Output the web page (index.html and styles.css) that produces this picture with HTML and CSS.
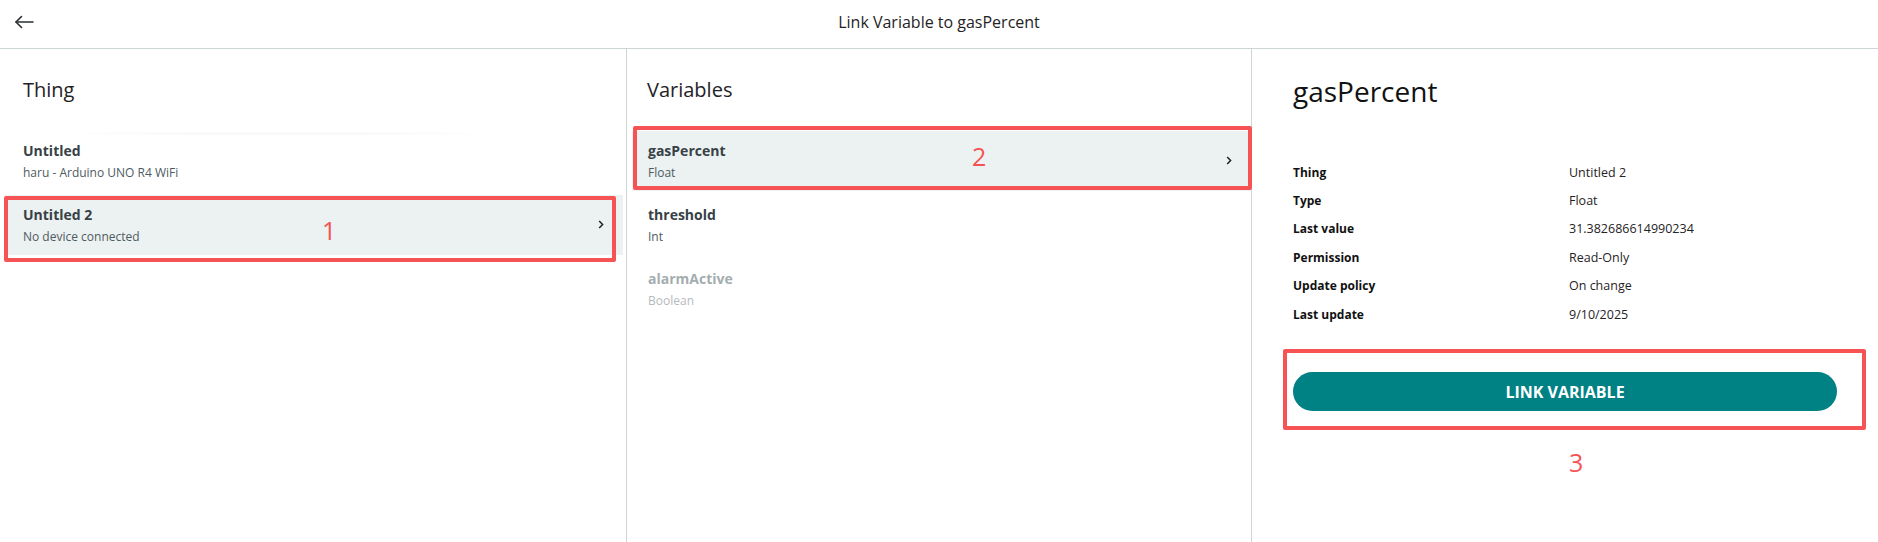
FILE: index.html
```html
<!DOCTYPE html>
<html lang="en">
<head>
<meta charset="utf-8">
<title>Link Variable to gasPercent</title>
<link rel="stylesheet" href="styles.css">
</head>
<body>
<div class="app">
  <header class="topbar">
    <button class="back" aria-label="Back">
      <svg width="20" height="14" viewBox="0 0 20 14" fill="none" stroke="#2b2f31" stroke-width="1.6" stroke-linecap="round" stroke-linejoin="round"><path d="M19 7H2"/><path d="M7.5 1.5L2 7l5.5 5.5"/></svg>
    </button>
    <h1 class="topbar-title">Link Variable to gasPercent</h1>
    <span></span>
  </header>

  <main class="columns">
    <section class="panel">
      <h2 class="panel-title">Thing</h2>
      <ul class="list list-things">
        <li class="item item-faded">
          <div class="item-text">
            <div class="item-name">Untitled</div>
            <div class="item-sub">haru - Arduino UNO R4 WiFi</div>
          </div>
        </li>
        <li class="item is-active">
          <div class="item-text">
            <div class="item-name">Untitled 2</div>
            <div class="item-sub">No device connected</div>
          </div>
          <svg class="chev" width="6" height="9" viewBox="0 0 6 9" fill="none" stroke="#1f2326" stroke-width="1.5"><path d="M1.2 1l3.4 3.5L1.2 8"/></svg>
        </li>
      </ul>
    </section>

    <section class="panel">
      <h2 class="panel-title">Variables</h2>
      <ul class="list list-vars">
        <li class="item is-active">
          <div class="item-text">
            <div class="item-name">gasPercent</div>
            <div class="item-sub">Float</div>
          </div>
          <svg class="chev" width="6" height="9" viewBox="0 0 6 9" fill="none" stroke="#1f2326" stroke-width="1.5"><path d="M1.2 1l3.4 3.5L1.2 8"/></svg>
        </li>
        <li class="item">
          <div class="item-text">
            <div class="item-name">threshold</div>
            <div class="item-sub">Int</div>
          </div>
        </li>
        <li class="item is-disabled">
          <div class="item-text">
            <div class="item-name">alarmActive</div>
            <div class="item-sub">Boolean</div>
          </div>
        </li>
      </ul>
    </section>

    <section class="panel panel-detail">
      <h2 class="detail-title">gasPercent</h2>
      <dl class="props">
        <dt>Thing</dt><dd>Untitled 2</dd>
        <dt>Type</dt><dd>Float</dd>
        <dt>Last value</dt><dd>31.382686614990234</dd>
        <dt>Permission</dt><dd>Read-Only</dd>
        <dt>Update policy</dt><dd>On change</dd>
        <dt>Last update</dt><dd>9/10/2025</dd>
      </dl>
      <button class="link-btn">LINK VARIABLE</button>
    </section>
  </main>

  <div class="mark mark-1"></div>
  <div class="mark mark-2"></div>
  <div class="mark mark-3"></div>
  <span class="num num-1">1</span>
  <span class="num num-2">2</span>
  <span class="num num-3">3</span>
</div>
</body>
</html>
```

FILE: styles.css
```css
* { box-sizing: border-box; }

html, body {
  margin: 0;
  padding: 0;
  background: #ffffff;
}

body {
  font-family: "Open Sans", "Noto Sans", "Liberation Sans", sans-serif;
  color: #222;
}

.app {
  position: relative;
  width: 1878px;
  height: 542px;
  overflow: hidden;
}

.topbar {
  height: 49px;
  border-bottom: 1px solid #cdd5d6;
  display: grid;
  grid-template-columns: 1fr auto 1fr;
  align-items: center;
  padding-bottom: 4px;
}

.back {
  border: 0;
  background: none;
  padding: 0;
  margin-left: 14px;
  width: 20px;
  height: 14px;
  display: flex;
  cursor: pointer;
}

.topbar-title {
  margin: 0;
  font-size: 16px;
  font-weight: 400;
  color: #1f2326;
  line-height: 22px;
}

.columns {
  display: grid;
  grid-template-columns: 627px 625px 1fr;
  height: 493px;
}

.panel {
  border-right: 1px solid #cdd5d6;
  padding-top: 27px;
}

.panel-detail {
  border-right: 0;
  padding: 23px 41px 0 41px;
}

.panel-title {
  margin: 0 0 27px 23px;
  font-size: 20px;
  font-weight: 400;
  line-height: 28px;
  color: #1f2326;
}

.panel:nth-child(2) .panel-title {
  margin-left: 20px;
}

.list {
  list-style: none;
  margin: 0;
  display: flex;
  flex-direction: column;
  gap: 4px;
}

.list-things { padding: 0 3px 0 5px; }
.list-vars { padding: 0 0 0 5px; }

.item {
  position: relative;
  height: 60px;
  padding: 10px 19px 0 18px;
  display: flex;
  align-items: flex-start;
}

.list-vars .item { padding-left: 16px; }

.item.is-active { background: #ecf1f1; }

.item-faded::before {
  content: "";
  position: absolute;
  left: 52px;
  top: 1px;
  width: 440px;
  height: 3px;
  background: linear-gradient(90deg, rgba(240,243,243,0), rgba(240,243,243,0.45) 30%, rgba(240,243,243,0.45) 70%, rgba(240,243,243,0));
}

.item-text { flex: 1; }

.item-name {
  font-size: 14px;
  font-weight: 700;
  line-height: 20px;
  color: #374146;
}

.item-sub {
  margin-top: 3px;
  font-size: 12px;
  line-height: 18px;
  color: #4e5b61;
}

.item.is-disabled .item-name { color: #a3adb0; }
.item.is-disabled .item-sub { color: #b3bbbd; }

.chev {
  align-self: center;
  margin-top: -11px;
}

.detail-title {
  margin: 0;
  font-size: 28px;
  font-weight: 400;
  line-height: 38px;
  color: #111;
}

.props {
  margin: 48px 0 0 0;
  display: grid;
  grid-template-columns: 276px 1fr;
  grid-auto-rows: 28.4px;
  align-items: center;
}

.props dt {
  font-size: 12px;
  font-weight: 700;
  color: #111;
}

.props dd {
  margin: 0;
  font-size: 12.5px;
  color: #1f2326;
}

.link-btn {
  display: block;
  width: 100%;
  height: 39px;
  margin-top: 44px;
  border: 0;
  border-radius: 20px;
  background: #008184;
  color: #fff;
  font-family: inherit;
  font-size: 16px;
  font-weight: 700;
  letter-spacing: 0;
}

/* annotation overlays */
.mark {
  position: absolute;
  border: 4px solid #f55354;
  border-radius: 2px;
}

.mark-1 { left: 4px; top: 196px; width: 612px; height: 66px; }
.mark-2 { left: 633px; top: 126px; width: 619px; height: 64px; }
.mark-3 { left: 1283px; top: 349px; width: 583px; height: 81px; }

.num {
  position: absolute;
  font-family: "Open Sans", "Noto Sans", sans-serif;
  font-weight: 400;
  font-size: 25px;
  line-height: 30px;
  color: #f55354;
}

.num-1 { left: 322px; top: 215px; }
.num-2 { left: 972px; top: 141px; }
.num-3 { left: 1569px; top: 447px; }
```
